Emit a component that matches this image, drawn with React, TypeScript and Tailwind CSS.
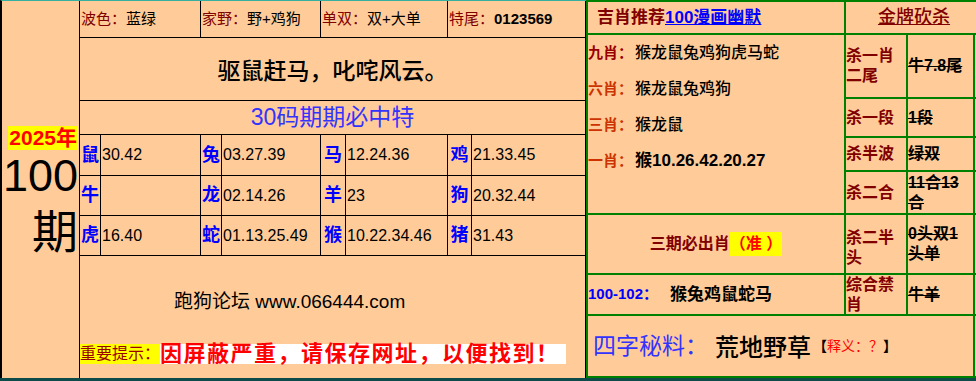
import React from "react";

const zodiac: [string, string][][] = [
  [["鼠", "30.42"], ["兔", "03.27.39"], ["马", "12.24.36"], ["鸡", "21.33.45"]],
  [["牛", ""], ["龙", "02.14.26"], ["羊", "23"], ["狗", "20.32.44"]],
  [["虎", "16.40"], ["蛇", "01.13.25.49"], ["猴", "10.22.34.46"], ["猪", "31.43"]],
];

// label / number widths for each pair of columns
const labelW = ["w-[21px]", "w-[21px]", "w-[25px]", "w-[24px]"];
const numW = ["w-[100px]", "w-[99px]", "w-[102px]", "flex-1"];

export default function App() {
  return (
    <div className="w-[976px] h-[381px] overflow-hidden bg-[#ffcc99] flex flex-col font-['Liberation_Sans','Noto_Sans_CJK_SC',sans-serif] text-black">
      <div className="flex h-[378px]">
        {/* left table */}
        <div className="w-[586px] shrink-0 h-[378px] flex border-t border-t-[#35b0a0] border-l-2 border-l-black">
          <div className="w-[78px] shrink-0 border-r border-black flex flex-col items-end justify-center pr-[1px] pt-[2px]">
            <span className="bg-[#ffff00] text-[#ff0000] font-bold text-[21px] leading-[24px] px-[1px]">2025年</span>
            <span className="text-[45px] leading-[50px] mt-[1px]">100</span>
            <span className="text-[46px] leading-[54px] font-['Noto_Sans_CJK_SC',sans-serif]">期</span>
          </div>

          <div className="flex-1 flex flex-col border-r border-black">
            {/* header */}
            <div className="h-[37px] shrink-0 flex border-b border-black text-[15px]">
              <div className="w-[121px] border-r border-black flex items-center pl-[1px]">
                <span className="text-[#800000]">波色：</span>
                <span>蓝绿</span>
              </div>
              <div className="w-[120px] border-r border-black flex items-center pl-[1px]">
                <span className="text-[#800000]">家野：</span>
                <span>野+鸡狗</span>
              </div>
              <div className="w-[127px] border-r border-black flex items-center pl-[1px]">
                <span className="text-[#800000]">单双：</span>
                <span>双+大单</span>
              </div>
              <div className="flex-1 flex items-center pl-[1px]">
                <span className="text-[#800000]">特尾：</span>
                <span className="font-bold">0123569</span>
              </div>
            </div>

            <div className="h-[63px] shrink-0 border-b border-black flex items-center justify-center text-[23px] font-medium font-['Noto_Sans_CJK_SC',sans-serif]">
              驱鼠赶马，叱咤风云。
            </div>

            <div className="h-[34px] shrink-0 border-b border-black flex items-center justify-center text-[23px] text-[#3333ff]">
              30码期期必中特
            </div>

            {zodiac.map((row, i) => (
              <div key={i} className={`${i === 0 ? "h-[41px]" : "h-[40px]"} shrink-0 border-b border-black flex`}>
                {row.map(([lab, num], j) => (
                  <React.Fragment key={j}>
                    <div className={`${labelW[j]} shrink-0 border-r border-black flex items-center justify-center text-[18px] font-bold text-[#0000ff]`}>
                      {lab}
                    </div>
                    <div className={`${numW[j]} ${j < 3 ? "border-r border-black" : ""} flex items-center pl-[1px] text-[16px]`}>
                      {num}
                    </div>
                  </React.Fragment>
                ))}
              </div>
            ))}

            {/* bottom */}
            <div className="flex-1 flex flex-col">
              <div className="mt-[36px] pl-[94px] text-[19px] leading-[20px] whitespace-nowrap">跑狗论坛 www.066444.com</div>
              <div className="mt-[32px] flex items-center leading-[20px] whitespace-nowrap">
                <span className="bg-[#ffff00] text-[#990000] text-[16px] w-[80px] h-[20px] leading-[20px]">重要提示：</span>
                <span className="bg-white text-[#ff0000] font-bold text-[22px] tracking-[1.5px] h-[20px] leading-[20px] pr-[6px]">
                  因屏蔽严重，请保存网址，以便找到！
                </span>
              </div>
            </div>
          </div>
        </div>

        {/* right table */}
        <div className="w-[396px] shrink-0 h-[378px] bg-[#008000] p-[2px] pr-0 grid grid-cols-[256px_60px_65px_1fr] grid-rows-[31px_62px_37px_32px_41px_58px_39px_60px] gap-[2px]">
          <div className="bg-[#ffcc99] flex items-center pl-[9px] text-[17px] font-bold">
            <span className="text-[#800000]">吉肖推荐</span>
            <span className="text-[#0000ff] underline">100漫画幽默</span>
          </div>
          <div className="col-span-3 bg-[#ffcc99] flex items-center justify-center text-[18px] font-medium text-[#800000] underline">
            金牌砍杀
          </div>

          <div className="row-span-4 bg-[#ffcc99] flex flex-col text-[16px] leading-[36px]">
            <div className="flex">
              <span className="w-[47px] text-[15px] font-bold text-[#990000]">九肖：</span>
              <span className="font-medium">猴龙鼠兔鸡狗虎马蛇</span>
            </div>
            <div className="flex">
              <span className="w-[47px] text-[15px] font-bold text-[#cc3300]">六肖：</span>
              <span className="font-medium">猴龙鼠兔鸡狗</span>
            </div>
            <div className="flex">
              <span className="w-[47px] text-[15px] font-bold text-[#cc3300]">三肖：</span>
              <span className="font-medium">猴龙鼠</span>
            </div>
            <div className="flex">
              <span className="w-[47px] text-[15px] font-bold text-[#cc3300]">一肖：</span>
              <span className="font-bold text-[17px]">猴10.26.42.20.27</span>
            </div>
          </div>

          <div className="bg-[#ffcc99] flex items-center text-[16px] font-bold text-[#800000] leading-[20px]">杀一肖二尾</div>
          <div className="bg-[#ffcc99] flex items-center text-[16px] font-bold line-through leading-[20px]">牛7.8尾</div>
          <div className="bg-[#ffcc99]" />

          <div className="bg-[#ffcc99] flex items-center text-[16px] font-bold text-[#800000]">杀一段</div>
          <div className="bg-[#ffcc99] flex items-center text-[16px] font-bold line-through">1段</div>
          <div className="bg-[#ffcc99]" />

          <div className="bg-[#ffcc99] flex items-center text-[16px] font-bold text-[#800000]">杀半波</div>
          <div className="bg-[#ffcc99] flex items-center text-[16px] font-bold line-through">绿双</div>
          <div className="bg-[#ffcc99]" />

          <div className="bg-[#ffcc99] flex items-center text-[16px] font-bold text-[#800000]">杀二合</div>
          <div className="bg-[#ffcc99] flex items-center text-[16px] font-bold line-through leading-[20px]">11合13合</div>
          <div className="bg-[#ffcc99]" />

          <div className="bg-[#ffcc99] flex items-center justify-center text-[16px] font-bold text-[#800000]">
            三期必出肖
            <span className="bg-[#ffff00] text-[#ff0000]">（准 ）</span>
          </div>
          <div className="bg-[#ffcc99] flex items-center text-[16px] font-bold text-[#800000] leading-[20px] pt-[8px]">杀二半头</div>
          <div className="bg-[#ffcc99] flex items-center text-[16px] font-bold line-through leading-[20px]">0头双1头单</div>
          <div className="bg-[#ffcc99]" />

          <div className="bg-[#ffcc99] flex items-center">
            <span className="text-[15px] font-bold text-[#0000ff] w-[82px]">100-102：</span>
            <span className="text-[17px] font-bold">猴兔鸡鼠蛇马</span>
          </div>
          <div className="bg-[#ffcc99] flex items-center text-[16px] font-bold text-[#800000] leading-[20px]">综合禁肖</div>
          <div className="bg-[#ffcc99] flex items-center text-[16px] font-bold line-through">牛羊</div>
          <div className="bg-[#ffcc99]" />

          <div className="col-span-3 bg-[#ffcc99] flex items-center pl-[5px]">
            <span className="text-[23px] text-[#3333ff] w-[122px]">四字秘料：</span>
            <span className="text-[24px] font-medium font-['Noto_Sans_CJK_SC',sans-serif]">荒地野草</span>
            <span className="text-[14px] font-bold ml-[2px]">
              【<span className="text-[#ff0000] font-normal">释义：？</span>】
            </span>
          </div>
          <div className="bg-[#ffcc99]" />
        </div>
      </div>
      <div className="h-[3px] bg-[#0d4a4a]" />
    </div>
  );
}
